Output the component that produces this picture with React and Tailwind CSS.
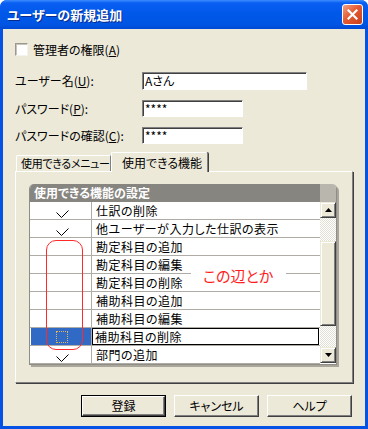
import React from 'react';

const rows = [
  { t: '仕訳の削除', c: true },
  { t: '他ユーザーが入力した仕訳の表示', c: true },
  { t: '勘定科目の追加' },
  { t: '勘定科目の編集' },
  { t: '勘定科目の削除' },
  { t: '補助科目の追加' },
  { t: '補助科目の編集' },
  { t: '補助科目の削除', sel: true },
  { t: '部門の追加', c: true },
];

function Check() {
  return (
    <svg width="13" height="8" viewBox="0 0 13 8">
      <polyline points="0.5,2.5 5.5,7.5 12.5,0.5" fill="none" stroke="#000" strokeWidth="1" />
    </svg>
  );
}

function ScrollBtn({ down }) {
  return (
    <div className="h-[16px] w-[16px] bg-[#ece9d8] border border-t-[#ece9d8] border-l-[#ece9d8] border-r-[#404040] border-b-[#404040] shadow-[inset_1px_1px_0_#fff,inset_-1px_-1px_0_#808080] flex items-center justify-center">
      <svg width="7" height="4" viewBox="0 0 7 4">
        <polygon points={down ? '0,0 7,0 3.5,4' : '3.5,0 7,4 0,4'} fill="#000" />
      </svg>
    </div>
  );
}

function Track({ h }) {
  return (
    <div
      className="w-[16px] bg-[image:repeating-conic-gradient(#ffffff_0%_25%,#e2dfd3_0%_50%)] bg-[length:2px_2px]"
      style={{ height: h }}
    />
  );
}

function Btn({ children, def }) {
  const inner = (
    <div className="w-full h-full bg-[#ece9d8] border border-t-white border-l-white border-r-[#404040] border-b-[#404040] shadow-[inset_-1px_-1px_0_#808080] flex items-center justify-center text-[12px] text-black">
      {children}
    </div>
  );
  if (def) {
    return <div className="w-[85px] h-[22px] border border-black">{inner}</div>;
  }
  return <div className="w-[85px] h-[22px]">{inner}</div>;
}

function Field({ w, h, value }) {
  return (
    <div
      className="bg-white border border-t-[#808080] border-l-[#808080] border-r-white border-b-white shadow-[inset_1px_1px_0_#404040] flex items-center pl-[2px] text-[12px] text-black leading-none"
      style={{ width: w, height: h }}
    >
      {value}
    </div>
  );
}

export default function App() {
  return (
    <div className="w-[368px] h-[429px] flex flex-col bg-[#0553e4] rounded-t-[7px] overflow-hidden [font-family:'Noto_Sans_CJK_JP','Noto_Sans',sans-serif] [font-feature-settings:'palt']">
      {/* title bar */}
      <div className="h-[29px] shrink-0 flex items-center justify-between pl-[7px] pr-[5px] bg-[linear-gradient(180deg,#3d8dff_0%,#0a5ff2_10%,#0058e9_45%,#0055e3_85%,#0049d4_100%)]">
        <span className="text-white font-bold text-[13px] [text-shadow:1px_1px_0_#0a2a8a]">
          ユーザーの新規追加
        </span>
        <div className="w-[21px] h-[21px] rounded-[3px] border border-white bg-[linear-gradient(135deg,#f3a184_0%,#e45a33_45%,#c8401a_100%)] flex items-center justify-center">
          <svg width="11" height="11" viewBox="0 0 11 11">
            <path d="M1.5 1.5 L9.5 9.5 M9.5 1.5 L1.5 9.5" stroke="#fff" strokeWidth="2.2" strokeLinecap="square" />
          </svg>
        </div>
      </div>

      {/* body */}
      <div className="flex-1 mx-[3px] mb-[3px] bg-[#ece9d8] pl-[12px] flex flex-col text-[12px] text-black">
        {/* admin checkbox */}
        <div className="mt-[14px] h-[13px] flex items-center gap-[5px]">
          <div className="w-[13px] h-[13px] bg-white border border-t-[#9a9890] border-l-[#9a9890] border-r-[#f4f3ee] border-b-[#f4f3ee] shadow-[inset_1px_1px_0_#c8c5b8]" />
          <span className="leading-none">
            管理者の権限(<span className="underline">A</span>)
          </span>
        </div>

        {/* user name */}
        <div className="mt-[16px] flex items-center">
          <span className="w-[127px] leading-none">
            ユーザー名(<span className="underline">U</span>):
          </span>
          <Field w={165} h={18} value="Aさん" />
        </div>
        <div className="mt-[10px] flex items-center">
          <span className="w-[127px] leading-none">
            パスワード(<span className="underline">P</span>):
          </span>
          <Field w={101} h={17} value="****" />
        </div>
        <div className="mt-[10px] flex items-center">
          <span className="w-[127px] leading-none">
            パスワードの確認(<span className="underline">C</span>):
          </span>
          <Field w={101} h={17} value="****" />
        </div>

        {/* tabs */}
        <div className="mt-[8px] h-[19px] flex items-end pl-[1px]">
          <div className="h-[16px] w-[95px] border-t border-l border-r border-t-white border-l-white border-r-[#808080] rounded-tl-[2px] pl-[4px] flex items-center leading-none whitespace-nowrap text-[11px] tracking-[-0.3px]">
            使用できるメニュー
          </div>
          <div className="relative z-10 -mb-[1px] h-[20px] w-[97px] bg-[#ece9d8] border-t border-l border-r border-t-white border-l-white border-r-[#808080] shadow-[1px_0_0_#404040] rounded-t-[2px] pl-[10px] flex items-center leading-none whitespace-nowrap">
            使用できる機能
          </div>
        </div>

        {/* panel */}
        <div className="w-[338px] h-[212px] border border-t-white border-l-white border-r-[#808080] border-b-[#808080] shadow-[1px_1px_0_#404040] pt-[12px] pl-[13px]">
          <div className="relative w-[308px] h-[181px] rounded-t-[5px] shadow-[2px_2px_0_#a9a69c]">
            <div className="w-full h-full rounded-t-[5px] overflow-hidden flex flex-col border-l border-r border-b border-[#8f8d85] bg-white">
              {/* header */}
              <div className="h-[18px] flex shrink-0">
                <div className="flex-1 bg-[#878580] text-white font-bold pl-[4px] flex items-center leading-none">
                  使用できる機能の設定
                </div>
                <div className="w-[16px] bg-[#b9b6ad]" />
              </div>
              {/* rows + scrollbar */}
              <div className="flex flex-1">
                <div className="flex-1 flex flex-col">
                  {rows.map((r, i) => (
                    <div key={i} className="h-[18px] flex border-b border-[#aeaca4]">
                      <div className="w-[62px] border-r border-[#aeaca4] relative">
                        {r.sel ? (
                          <div className="absolute left-[1px] top-0 right-0 bottom-0 bg-[#316ac5]">
                            <div className="absolute left-[25px] top-[3px] w-[12px] h-[12px] border border-dotted border-[#e7b45a]" />
                          </div>
                        ) : null}
                        {r.c ? (
                          <div className="absolute left-[26px] bottom-[1px] flex">
                            <Check />
                          </div>
                        ) : null}
                      </div>
                      <div
                        className={
                          r.sel
                            ? 'flex-1 pl-[3px] flex items-center leading-none shadow-[inset_0_0_0_1px_#000] mr-[1px] tracking-[0.5px]'
                            : 'flex-1 pl-[4px] flex items-center leading-none tracking-[0.5px]'
                        }
                      >
                        {r.t}
                      </div>
                    </div>
                  ))}
                </div>
                <div className="w-[16px] flex flex-col">
                  <ScrollBtn />
                  <Track h={23} />
                  <div className="h-[85px] w-[16px] bg-[#ece9d8] border border-t-[#ece9d8] border-l-[#ece9d8] border-r-[#404040] border-b-[#404040] shadow-[inset_1px_1px_0_#fff,inset_-1px_-1px_0_#808080]" />
                  <Track h={21} />
                  <ScrollBtn down />
                </div>
              </div>
            </div>

            {/* annotation overlays */}
            <div className="absolute left-[17px] top-[56px] w-[37px] h-[110px] border border-[#ff2a2a] rounded-[10px]" />
            <div className="absolute left-[162px] top-[80px] w-[95px] h-[22px] bg-white pl-[12px] flex items-center text-[15px] leading-none text-[#ff1e1e]">
              この辺とか
            </div>
          </div>
        </div>

        {/* buttons */}
        <div className="mt-[12px] pl-[66px] flex gap-[8px]">
          <Btn def>登録</Btn>
          <Btn>キャンセル</Btn>
          <Btn>ヘルプ</Btn>
        </div>
      </div>
    </div>
  );
}
